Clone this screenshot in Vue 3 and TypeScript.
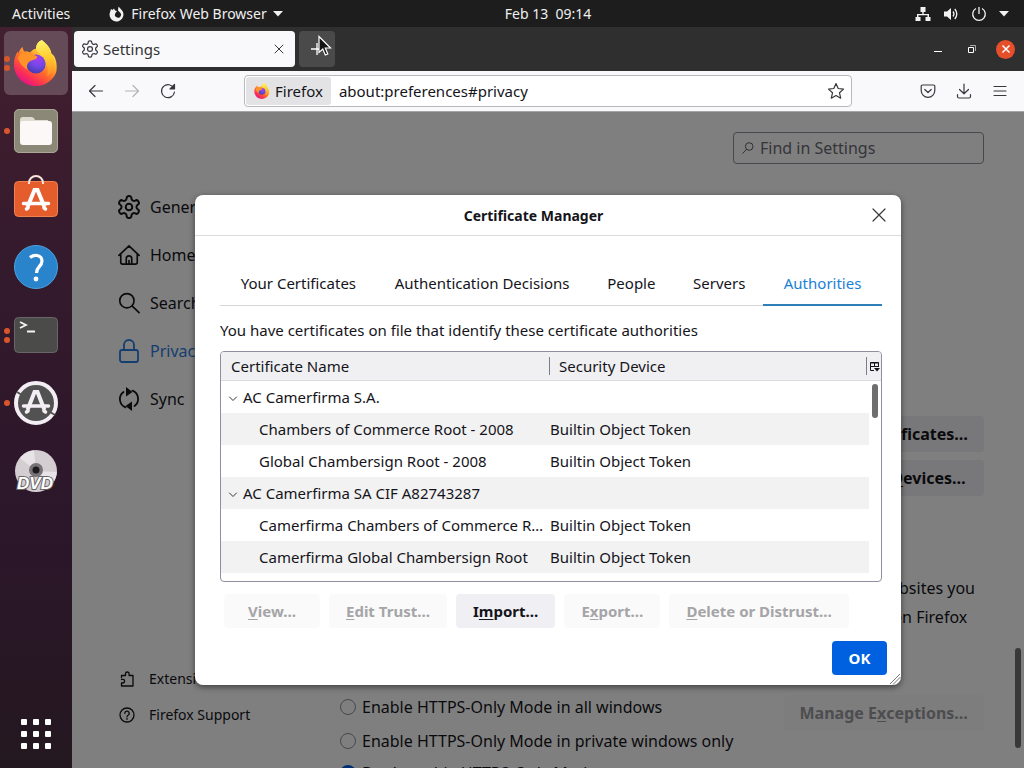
<script setup lang="ts">
import { ref } from 'vue'

interface Row { name: string; device?: string }

const gear = 'M12.22 2h-.44a2 2 0 0 0-2 2v.18a2 2 0 0 1-1 1.73l-.43.25a2 2 0 0 1-2 0l-.15-.08a2 2 0 0 0-2.73.73l-.22.38a2 2 0 0 0 .73 2.73l.15.1a2 2 0 0 1 1 1.72v.51a2 2 0 0 1-1 1.74l-.15.09a2 2 0 0 0-.73 2.73l.22.38a2 2 0 0 0 2.73.73l.15-.08a2 2 0 0 1 2 0l.43.25a2 2 0 0 1 1 1.73V20a2 2 0 0 0 2 2h.44a2 2 0 0 0 2-2v-.18a2 2 0 0 1 1-1.73l.43-.25a2 2 0 0 1 2 0l.15.08a2 2 0 0 0 2.73-.73l.22-.39a2 2 0 0 0-.73-2.73l-.15-.08a2 2 0 0 1-1-1.74v-.5a2 2 0 0 1 1-1.74l.15-.09a2 2 0 0 0 .73-2.73l-.22-.38a2 2 0 0 0-2.73-.73l-.15.08a2 2 0 0 1-2 0l-.43-.25a2 2 0 0 1-1-1.73V4a2 2 0 0 0-2-2zM15 12a3 3 0 1 1-6 0a3 3 0 1 1 6 0'

const categories = [
  { label: 'General', icon: gear, box: '2 1 20 22', active: false },
  { label: 'Home', icon: 'M1 12.5 12 2l11 10.500M3 10.500V20a2 2 0 0 0 2 2h14a2 2 0 0 0 2-2V10.500M9 22v-6a3 3 0 0 1 6 0v6M12 18v4', box: '0 0 24 24', active: false },
  { label: 'Search', icon: 'M17.500 9.500a7.800 7.800 0 1 1-15.600 0a7.800 7.800 0 1 1 15.600 0M15.500 15.500 23 22.500', box: '0 0 24 24', active: false },
  { label: 'Privacy & Security', icon: 'M5 11h14a2 2 0 0 1 2 2v8a2 2 0 0 1-2 2H5a2 2 0 0 1-2-2v-8a2 2 0 0 1 2-2zM7 11V6a5 5 0 0 1 10 0v5', box: '1 0 22 24', active: true },
  { label: 'Sync', icon: 'M8.500 20.300A8.800 8.800 0 0 1 6.500 5M15.500 3.700A8.800 8.800 0 0 1 17.500 19', fill: 'M9 0v9.500l6.500-4.500zM15 24v-9.500L8.500 19z', box: '1 0 22 24', active: false },
]

const tabs = ['Your Certificates', 'Authentication Decisions', 'People', 'Servers', 'Authorities']
const activeTab = ref('Authorities')

const rows: Row[] = [
  { name: 'AC Camerfirma S.A.' },
  { name: 'Chambers of Commerce Root - 2008', device: 'Builtin Object Token' },
  { name: 'Global Chambersign Root - 2008', device: 'Builtin Object Token' },
  { name: 'AC Camerfirma SA CIF A82743287' },
  { name: 'Camerfirma Chambers of Commerce R…', device: 'Builtin Object Token' },
  { name: 'Camerfirma Global Chambersign Root', device: 'Builtin Object Token' },
]

const actions = [
  { pre: '', key: 'V', post: 'iew…', disabled: true },
  { pre: '', key: 'E', post: 'dit Trust…', disabled: true },
  { pre: 'I', key: 'm', post: 'port…', disabled: false },
  { pre: 'E', key: 'x', post: 'port…', disabled: true },
  { pre: '', key: 'D', post: 'elete or Distrust…', disabled: true },
]

const httpsMode = ref('off')
const query = ref('')
const address = ref('about:preferences#privacy')
</script>

<template>
  <div class="desktop">
    <svg class="defs" aria-hidden="true">
      <defs>
        <linearGradient id="fxBody" x1=".8" y1=".1" x2=".25" y2=".95">
          <stop offset="0" stop-color="#fff44f" />
          <stop offset=".3" stop-color="#ffb52e" />
          <stop offset=".58" stop-color="#ff6a2b" />
          <stop offset=".82" stop-color="#fb2f55" />
          <stop offset="1" stop-color="#e31587" />
        </linearGradient>
        <linearGradient id="fxFlame" x1=".5" y1="0" x2=".6" y2="1">
          <stop offset="0" stop-color="#fff36b" />
          <stop offset=".5" stop-color="#ffcb2e" />
          <stop offset="1" stop-color="#ff8a26" />
        </linearGradient>
        <radialGradient id="fxGlobe" cx=".6" cy=".25" r=".8">
          <stop offset="0" stop-color="#a43df5" />
          <stop offset=".5" stop-color="#7048e4" />
          <stop offset="1" stop-color="#3f3aa8" />
        </radialGradient>
        <symbol id="firefox" viewBox="0 0 48 48">
          <path fill="url(#fxBody)" d="M30 0c5 4 9 8 10 14 2 1 3 3 4 5 2 5 2 11 1 15-3 8-11 14-21 14C11 48 1 38 1 25c0-6 2-10 4-13l1 2c0-3 2-5 4-7 0 2 1 4 2 5 2 0 4 0 6 1 1-2 4-4 6-4 0-4 2-7 6-9z" />
          <path fill="url(#fxFlame)" d="M30 0c5 4 9 8 10 14 5 8 3 20-5 24 2-4 2-9 0-12 0-7-7-9-11-17 0-4 2-7 6-9z" />
          <circle cx="24" cy="25" r="10" fill="url(#fxGlobe)" />
          <path fill="#ff9329" d="M5 19c2-5 8-8 13-6 3 1 4 3 7 4 1 1 0 2-2 3l-5 2c-3 2-4 5-3 9-5-3-8-7-10-12z" />
        </symbol>
      </defs>
    </svg>

    <header class="panel">
      <div class="panel-left">
        <button type="button">Activities</button>
        <button type="button" class="app-menu">
          <svg width="16" height="16" viewBox="0 0 16 16"><path fill="#f2f2f2" d="M9.500.500 12 3.200A7 7 0 1 1 1.200 5.500L2 3l1.500 1L5 2.500l1 2L8 5 6.500 7a3 3 0 1 0 4.500-.5L9 4.500z" /></svg>
          <span>Firefox Web Browser</span>
          <svg width="10" height="6" viewBox="0 0 10 6"><path fill="#f2f2f2" d="M0 0h10L5 5.500z" /></svg>
        </button>
      </div>
      <button type="button" class="clock">Feb 13&nbsp; 09:14</button>
      <button type="button" class="status" aria-label="System menu">
        <svg width="16" height="16" viewBox="0 0 16 16"><path fill="#f2f2f2" d="M5.500 1h5v5H8.700v2H14v3h1.500v4h-5v-4h2V9.300H3.500V11h2v4h-5v-4H2V8h5.300V6H5.500z" /></svg>
        <svg width="16" height="16" viewBox="0 0 16 16"><path fill="#f2f2f2" d="M1 5.500h3L8 2v12l-4-3.500H1z" /><path fill="none" stroke="#f2f2f2" stroke-width="1.300" d="M10 5.500q2 2.500 0 5M11.800 3q4 5 0 10" /></svg>
        <svg width="16" height="16" viewBox="0 0 16 16"><path fill="none" stroke="#f2f2f2" stroke-width="1.300" d="M5 2.500a6.300 6.300 0 1 0 6 0M8 1v7" /></svg>
        <svg width="10" height="6" viewBox="0 0 10 6"><path fill="#f2f2f2" d="M0 0h10L5 5.500z" /></svg>
      </button>
    </header>

    <div class="workspace">
      <nav class="dock" aria-label="Dock">
        <button type="button" class="launcher current" aria-label="Firefox">
          <span class="dots"><i></i><i></i></span>
          <svg width="46" height="46"><use href="#firefox" /></svg>
        </button>
        <button type="button" class="launcher" aria-label="Files">
          <span class="dots"><i></i></span>
          <svg width="44" height="44" viewBox="0 0 44 44"><rect width="44" height="44" rx="5" fill="#8c8878" /><rect x=".5" y=".5" width="43" height="43" rx="5" fill="none" stroke="#aaa697" /><path fill="#dedbd0" d="M6 14v-3q0-3 3-3h8q3 0 4 3h13v6z" /><rect x="6" y="12" width="32" height="24" rx="3" fill="#fcf8f7" /></svg>
        </button>
        <button type="button" class="launcher" aria-label="Software">
          <svg width="44" height="44" viewBox="0 0 44 44"><rect x=".5" y="4.500" width="43" height="35" rx="4" fill="#e55d2c" stroke="#f0824f" /><path d="M15 7V6a7 7 0 0 1 14 0v1" fill="none" stroke="#f9e3da" stroke-width="2" /><path fill="none" stroke="#fff" stroke-width="4" d="m13.500 30 7-17h3l7 17" /><path stroke="#fff" stroke-width="3.500" stroke-linecap="round" d="M9.500 26.500h25M12.500 32l1.500-1M31.500 32l-1.500-1" /></svg>
        </button>
        <button type="button" class="launcher" aria-label="Help">
          <svg width="44" height="44" viewBox="0 0 44 44"><circle cx="22" cy="22" r="21.500" fill="#2a84cc" stroke="#4aa2e2" /><path fill="none" stroke="#fff" stroke-width="3.200" d="M16 12.500q3-2.500 7-2 5 1 5 5.500 0 3-3 6-2.500 2.500-2.500 6" /><circle cx="22" cy="34" r="2.400" fill="#fff" /></svg>
        </button>
        <button type="button" class="launcher" aria-label="Terminal">
          <span class="dots"><i></i><i></i></span>
          <svg width="44" height="44" viewBox="0 0 44 44"><rect x=".5" y="4.500" width="43" height="35" rx="4" fill="#4b4b4a" stroke="#686667" /><path fill="none" stroke="#f5f5f5" stroke-width="1.800" d="m6 9 6 3-6 3M13 18.500h8" /></svg>
        </button>
        <button type="button" class="launcher" aria-label="Updater">
          <span class="dots"><i></i></span>
          <svg width="44" height="44" viewBox="0 0 44 44"><circle cx="22" cy="22" r="20" fill="#535252" stroke="#f3eef3" stroke-width="4" /><path stroke="#535252" stroke-width="2" d="m3 11 5 3M36 31l5 3" /><path fill="none" stroke="#f3eef3" stroke-width="4" d="m13.500 29 7-18h3l7 18" /><path stroke="#f3eef3" stroke-width="3.500" stroke-linecap="round" d="M9.500 25h25M12.500 31l1.500-1M31.500 31l-1.500-1" /></svg>
        </button>
        <button type="button" class="launcher" aria-label="DVD drive">
          <svg width="44" height="44" viewBox="0 0 44 44"><circle cx="22" cy="22" r="21" fill="#d4cdd2" /><path fill="#f1ecef" opacity=".7" d="M22 22 6 9A21 21 0 0 1 20 1zM22 22l16 13a21 21 0 0 0 5-12z" /><circle cx="22" cy="21" r="7" fill="#777276" /><circle cx="22" cy="21" r="3.500" fill="#1c1a1b" /><text x="21" y="40" text-anchor="middle" class="dvd">DVD</text></svg>
        </button>
        <button type="button" class="launcher apps" aria-label="Show applications">
          <span v-for="n in 9" :key="n"></span>
        </button>
      </nav>

      <section class="browser">
        <div class="tabstrip">
          <div class="tab">
            <svg width="18" height="18" viewBox="1 1 22 22" class="line gear"><path :d="gear" /></svg>
            <span>Settings</span>
            <button type="button" aria-label="Close tab"><svg width="10" height="10" viewBox="0 0 10 10" class="line thin"><path d="m1 1 8 8M9 1 1 9" /></svg></button>
          </div>
          <button type="button" class="new-tab" aria-label="New tab"><svg width="16" height="16" viewBox="0 0 16 16"><path fill="none" stroke="#fff" stroke-width="1.300" d="M2 8h12M8 2v12" /></svg></button>
          <svg class="pointer" width="14" height="22" viewBox="0 0 14 22"><path fill="#151515" stroke="#fff" stroke-width="1.200" d="M1 1.500v16l3.800-3.500 2.500 6 2.500-1-2.500-6H12.500z" /></svg>
          <div class="window-buttons">
            <button type="button" aria-label="Minimize"><svg width="10" height="10" viewBox="0 0 10 10"><path stroke="#fff" d="M1 7.500h8" /></svg></button>
            <button type="button" aria-label="Restore"><svg width="10" height="10" viewBox="0 0 10 10"><path fill="none" stroke="#fff" d="M1.500 3.500h5v5h-5z" /><path fill="none" stroke="#aaa" d="M3 1.500h5.500V7" /></svg></button>
            <button type="button" class="close-window" aria-label="Close"><svg width="10" height="10" viewBox="0 0 10 10"><path stroke="#fff" stroke-width="1.500" d="m1.500 1.500 7 7M8.500 1.500l-7 7" /></svg></button>
          </div>
        </div>

        <div class="toolbar">
          <div class="nav-buttons">
            <button type="button" aria-label="Back"><svg width="16" height="16" viewBox="0 0 16 16" class="line"><path d="M14.500 8H1.500M7 2.500 1.500 8 7 13.500" /></svg></button>
            <button type="button" aria-label="Forward" disabled><svg width="16" height="16" viewBox="0 0 16 16" class="line"><path d="M1.500 8h13M9 2.500 14.500 8 9 13.500" /></svg></button>
            <button type="button" aria-label="Reload"><svg width="16" height="16" viewBox="0 0 16 16" class="line"><path d="M14 5.500A6.500 6.500 0 1 0 14.500 9" /><path d="M14.500 1.500v4.500H10z" fill="#333" /></svg></button>
          </div>
          <div class="urlbar">
            <span class="identity"><svg width="16" height="16"><use href="#firefox" /></svg>Firefox</span>
            <input v-model="address" type="text" aria-label="Address">
            <button type="button" aria-label="Bookmark"><svg width="18" height="18" viewBox="0 0 18 18" class="line"><path d="m9 1.500 2.200 5 5.300.6-4 3.700 1.200 5.400L9 13.500l-4.700 2.700 1.200-5.400-4-3.700 5.300-.6z" /></svg></button>
          </div>
          <div class="tools">
            <button type="button" aria-label="Pocket"><svg width="16" height="16" viewBox="0 0 16 16" class="line"><path d="M2.500 2h11a1.300 1.300 0 0 1 1.300 1.300V7.500a6.800 6.800 0 0 1-13.600 0V3.300A1.300 1.300 0 0 1 2.500 2zM4.800 6.500 8 9.500l3.200-3" /></svg></button>
            <button type="button" aria-label="Downloads"><svg width="16" height="16" viewBox="0 0 16 16" class="line"><path d="M8 1v9.500M3.500 6.500 8 10.800l4.500-4.300M1.500 11.500v2A1.500 1.500 0 0 0 3 15h10a1.500 1.500 0 0 0 1.500-1.500v-2" /></svg></button>
            <button type="button" aria-label="Menu"><svg width="16" height="16" viewBox="0 0 16 16" class="line"><path d="M2 3.500h12M2 8h12M2 12.500h12" /></svg></button>
          </div>
        </div>

        <div class="viewport">
          <div class="page">
            <aside>
              <nav class="categories" aria-label="Categories">
                <a v-for="c in categories" :key="c.label" href="#" :class="{ active: c.active }">
                  <svg width="22" height="24" :viewBox="c.box"><path :d="c.icon" /><path v-if="c.fill" :d="c.fill" class="solid" /></svg>
                  <span>{{ c.label }}</span>
                </a>
              </nav>
              <nav class="links" aria-label="More">
                <a href="#"><svg width="16" height="16" viewBox="0 0 16 16"><path d="M2.500 4.500h4V2.800a1.800 1.800 0 0 1 3.600 0v1.700H14V15H2.500v-3h1.300a1.800 1.800 0 0 0 0-3.600H2.500M2.500 4.500v2" /></svg><span>Extensions &amp; Themes</span></a>
                <a href="#"><svg width="16" height="16" viewBox="0 0 16 16"><circle cx="8" cy="8" r="7" /><path d="M5.800 6.300a2.200 2.200 0 1 1 3.300 1.900q-1.100.6-1.100 1.600M8 11.500v.8" /></svg><span>Firefox Support</span></a>
              </nav>
            </aside>
            <main>
              <label class="find">
                <svg width="12" height="12" viewBox="0 0 12 12"><path fill="none" stroke="#5b5b66" d="M11 4.500a3.800 3.800 0 1 1-7.600 0a3.800 3.800 0 1 1 7.600 0M4.500 7.300.500 11.500" /></svg>
                <input v-model="query" type="search" placeholder="Find in Settings" aria-label="Find in Settings">
              </label>
              <div class="side-buttons">
                <button type="button">View <u>C</u>ertificates…</button>
                <button type="button">Security&nbsp;<u>D</u>evices…</button>
              </div>
              <p>websites you<br>then Firefox</p>
              <div class="https">
                <div class="radios">
                  <label><input v-model="httpsMode" type="radio" name="https" value="all"><span>Enable HTTPS-Only Mode in all windows</span></label>
                  <label><input v-model="httpsMode" type="radio" name="https" value="private"><span>Enable HTTPS-Only Mode in private windows only</span></label>
                  <label><input v-model="httpsMode" type="radio" name="https" value="off"><span>Don’t enable HTTPS-Only Mode</span></label>
                </div>
                <button type="button" disabled>Manage E<u>x</u>ceptions…</button>
              </div>
            </main>
            <span class="page-thumb"></span>
          </div>

          <div class="overlay">
            <div class="dialog" role="dialog" aria-labelledby="dlg-title">
              <div class="dialog-title">
                <h1 id="dlg-title">Certificate Manager</h1>
                <button type="button" aria-label="Close dialog"><svg width="14" height="14" viewBox="0 0 14 14" class="line"><path d="m1 1 12 12M13 1 1 13" /></svg></button>
              </div>
              <div class="dialog-body">
                <div class="tabs" role="tablist">
                  <button v-for="t in tabs" :key="t" type="button" role="tab" :aria-selected="t === activeTab" @click="activeTab = t">{{ t }}</button>
                </div>
                <p class="intro">You have certificates on file that identify these certificate authorities</p>
                <div class="tree">
                  <table>
                    <thead>
                      <tr>
                        <th>Certificate Name</th>
                        <th>Security Device</th>
                        <th class="picker"><button type="button" aria-label="Choose columns"><svg width="11" height="11" viewBox="0 0 11 11"><path fill="none" stroke="#15141a" d="M5 9.500H1.500v-8h8V6M1 2h9M1.500 5.500h8M5.500 1.500v4" /><path fill="#15141a" d="M5 7h6l-3 3.500z" /></svg></button></th>
                      </tr>
                    </thead>
                    <tbody>
                      <tr v-for="r in rows" :key="r.name" :class="{ group: !r.device }">
                        <td><svg v-if="!r.device" width="8" height="6" viewBox="0 0 8 6" class="line thin"><path d="m.5 1 3.500 3.500L7.500 1" /></svg>{{ r.name }}</td>
                        <td>{{ r.device }}</td>
                        <td class="gutter"></td>
                      </tr>
                    </tbody>
                  </table>
                  <span class="thumb"></span>
                </div>
                <div class="actions">
                  <button v-for="a in actions" :key="a.pre + a.key" type="button" :disabled="a.disabled">{{ a.pre }}<u>{{ a.key }}</u>{{ a.post }}</button>
                </div>
              </div>
              <div class="dialog-footer"><button type="button">OK</button></div>
              <svg class="grip" width="12" height="12" viewBox="0 0 12 12"><path stroke="#777" d="M1 11 11 1M4 11.500 11.500 4M8 11.500 11.500 8" /></svg>
            </div>
          </div>
        </div>
      </section>
    </div>
  </div>
</template>

<style>
html, body { margin: 0; overflow: hidden; }
</style>

<style scoped>
* { box-sizing: border-box; }
.desktop {
  display: flex; flex-direction: column; height: 100vh; overflow: hidden;
  font: 15px/20px "Noto Sans", "Open Sans", sans-serif; color: #15141a;
}
.defs { position: absolute; width: 0; height: 0; }
button { font: inherit; color: inherit; background: none; border: 0; padding: 0; display: inline-flex; align-items: center; justify-content: center; white-space: pre; }
button u { text-underline-offset: 2px; }
a { color: inherit; text-decoration: none; }
svg { flex: none; overflow: visible; }
.line { fill: none; stroke: #38383d; stroke-width: 1.2; stroke-linecap: round; stroke-linejoin: round; }
.line.thin { stroke-width: 1; }
.line.gear { stroke-width: 1.5; }

.panel { display: grid; grid-template-columns: 72px 1fr auto 1fr; align-items: center; height: 27px; flex: none; padding: 0 12px; background: #1d1d1d; color: #f0f0f0; font-size: 14px; }
.panel-left { grid-column: span 2; display: flex; gap: 39px; }
.app-menu { gap: 6px; }
.status { justify-self: end; gap: 12px; padding-right: 3px; }

.workspace { display: flex; flex: 1; min-height: 0; }
.dock { display: flex; flex-direction: column; align-items: center; gap: 4px; width: 72px; flex: none; padding: 4px 0 2px; background: linear-gradient(#43202f, #351a2d 30%, #2b1629 70%, #241820); }
.launcher { position: relative; width: 64px; height: 64px; border-radius: 6px; }
.launcher.current { background: #644b57; }
.dots { position: absolute; left: 0; top: 0; bottom: 0; display: flex; flex-direction: column; justify-content: center; gap: 3px; }
.dots i { width: 6px; height: 6px; border-radius: 3px; background: #d9552c; }
.dvd { font: italic 700 17px "Liberation Sans", sans-serif; fill: #fff; stroke: #666; stroke-width: 2px; paint-order: stroke; }
.apps { margin-top: auto; display: grid; grid-template-columns: repeat(3, 6px); gap: 6px; align-content: center; }
.apps span { width: 6px; height: 6px; border-radius: 1px; background: #fff; }

.browser { display: flex; flex-direction: column; flex: 1; min-width: 0; }
.tabstrip { position: relative; display: flex; align-items: center; height: 44px; flex: none; gap: 4px; padding: 0 2px; background: #302f30; }
.tab { display: flex; align-items: center; gap: 4px; width: 221px; height: 36px; padding: 0 11px 0 7px; border-radius: 4px; background: #f9f9fb; color: #333; }
.tab button { margin-left: auto; }
.new-tab { width: 36px; height: 36px; border-radius: 4px; background: #4b4a4b; }
.pointer { position: absolute; left: 246px; top: 8px; }
.window-buttons { display: flex; align-items: center; gap: 15px; margin-left: auto; padding-right: 7px; }
.window-buttons button { width: 19px; height: 19px; border-radius: 50%; }
.window-buttons .close-window { background: #e5502a; }

.toolbar { display: grid; grid-template-columns: 172px 1fr 172px; align-items: center; height: 41px; flex: none; background: #f9f9fb; border-bottom: 1px solid #a5a5a8; }
.nav-buttons { display: flex; gap: 20px; padding-left: 16px; }
.nav-buttons button:disabled { opacity: .35; }
.tools { display: flex; gap: 20px; justify-content: flex-end; padding-right: 16px; }
.urlbar { display: flex; align-items: center; height: 32px; padding: 1px; border: 1px solid #b9b9bd; border-radius: 4px; background: #fff; }
.identity { display: flex; align-items: center; gap: 5px; height: 28px; padding: 0 8px; border-radius: 3px; background: #e3e3e5; }
.urlbar input { flex: 1; min-width: 0; height: 28px; padding: 0 8px; border: 0; outline: 0; background: none; font: inherit; color: inherit; }
.urlbar button { margin-right: 5px; }

.viewport { position: relative; flex: 1; min-height: 0; overflow: hidden; background: #fff; }
.page { position: absolute; inset: 0; display: flex; overflow: hidden; padding: 0 40px 0 46px; }
aside { display: flex; flex-direction: column; justify-content: space-between; width: 222px; flex: none; padding: 71px 0 35px; white-space: nowrap; }
aside svg { fill: none; stroke: currentColor; stroke-width: 1.8; stroke-linecap: round; stroke-linejoin: round; }
aside svg .solid { fill: currentColor; stroke: none; }
.categories a { display: flex; align-items: center; gap: 10px; height: 48px; font-size: 16px; }
.categories .active { color: #2a7de0; }
.links a { display: flex; align-items: center; gap: 14px; height: 36px; padding-left: 1px; font-size: 14px; }
.links svg { stroke-width: 1.3; }
main { flex: 1; min-width: 0; display: flex; flex-direction: column; font-size: 16px; }
main > * { flex: none; }
.find { align-self: flex-end; display: flex; align-items: center; gap: 6px; width: 251px; height: 32px; margin-top: 20px; padding: 0 8px; border: 1px solid #8f8f9d; border-radius: 4px; }
.find input { flex: 1; min-width: 0; border: 0; outline: 0; background: none; padding: 0; font: inherit; color: inherit; }
.find input::placeholder { color: #6b6b74; opacity: 1; }
.side-buttons { display: flex; flex-direction: column; align-self: flex-end; gap: 8px; margin-top: 252px; }
.side-buttons button, .https button { height: 36px; padding: 0 16px; border-radius: 4px; background: #f0f0f4; font-weight: 700; }
main p { align-self: flex-end; margin: 78px 9px 0; line-height: 29px; white-space: nowrap; }
.https { display: flex; justify-content: space-between; align-items: flex-start; margin-top: 58px; }
.https button { color: #9a9aa0; background: #fafafb; margin-top: 5px; }
.radios label { display: flex; align-items: center; gap: 6px; height: 34px; white-space: nowrap; }
.radios label:last-child { height: 30px; }
.radios input { appearance: none; width: 16px; height: 16px; margin: 0; border: 1px solid #8f8f9d; border-radius: 50%; }
.radios input:checked { border: 5px solid #0061e0; }
.page-thumb { position: absolute; right: 3px; bottom: 20px; width: 6px; height: 100px; border-radius: 3px; background: #707070; }

.overlay { position: absolute; inset: 0; display: flex; align-items: center; justify-content: center; background: rgba(0, 0, 0, .5); }
.dialog { position: relative; width: 706px; max-width: 100%; border-radius: 8px; background: #fff; box-shadow: 0 2px 6px rgba(0, 0, 0, .5); }
.dialog-title { display: flex; align-items: center; height: 41px; padding-right: 15px; border-bottom: 1px solid #dcdcde; }
h1 { flex: 1; margin: 0; padding-top: 2px; font-size: 14px; font-weight: 700; text-align: center; }
.dialog-body { padding: 27px 19px 0 25px; }
.tabs { display: grid; grid-template-columns: 157fr 211fr 88fr 88fr 119fr; border-bottom: 1px solid #d6d6da; }
.tabs button { height: 43px; margin-bottom: -1px; padding-bottom: 2px; border-bottom: 2px solid transparent; }
.tabs button[aria-selected="true"] { color: #1b7fd6; border-bottom-color: #2f7fb8; }
.intro { margin: 14px 0 11px; }
.tree { position: relative; height: 231px; border: 1px solid #8f8f9d; border-radius: 4px; overflow: hidden; }
table { width: 100%; table-layout: fixed; border-collapse: separate; border-spacing: 0; }
th { position: relative; height: 29px; padding: 0 0 0 9px; text-align: left; font-weight: 400; background: #f0f0f2; border-bottom: 1px solid #dcdce0; }
th:first-child { width: 329px; padding-left: 10px; }
th + th::before { content: ""; position: absolute; left: -1px; top: 5px; width: 1px; height: 18px; background: #7d7d85; }
th.picker { width: 12px; padding: 0; }
th.picker::before { left: -3px; }
.picker button { display: flex; }
td { height: 32px; padding: 0; overflow: hidden; text-overflow: ellipsis; white-space: nowrap; }
td:first-child { padding: 0 0 0 38px; }
.group td:first-child { padding-left: 8px; }
td svg { margin-right: 6px; vertical-align: 1px; }
tbody tr:nth-child(even) td:not(.gutter) { background: #f2f2f2; }
.thumb { position: absolute; right: 3px; top: 32px; width: 6px; height: 34px; border-radius: 3px; background: #6e6e6e; }
.actions { display: flex; gap: 9px; margin-top: 12px; padding-left: 4px; }
.actions button { height: 34px; min-width: 96px; padding: 0 17px; border-radius: 4px; background: #f0f0f4; font-weight: 700; }
.actions button:disabled { color: #a5a5a8; background: #fafafa; }
.dialog-footer { display: flex; justify-content: flex-end; padding: 13px 14px 10px; }
.dialog-footer button { min-width: 55px; height: 34px; border-radius: 4px; background: #0061e0; color: #fff; font-weight: 700; }
.grip { position: absolute; right: 0; bottom: 0; }
</style>
